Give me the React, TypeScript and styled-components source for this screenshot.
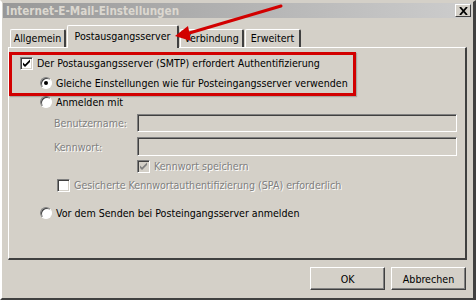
import React from "react";
import styled, { createGlobalStyle } from "styled-components";

const GlobalStyle = createGlobalStyle`
  html, body {
    margin: 0;
    padding: 0;
    background: #d4d0c8;
  }
  body {
    font-family: "DejaVu Sans Condensed", "DejaVu Sans", sans-serif;
    font-size: 10.6px;
    color: #000;
  }
`;

const face = "#d4d0c8";
const shadow = "#808080";
const darkShadow = "#404040";

const Window = styled.div`
  position: relative;
  box-sizing: border-box;
  width: 476px;
  height: 300px;
  background: ${face};
  border-left: 2px solid #fff;
  border-top: 2px solid ${face};
  border-right: 3px solid ${darkShadow};
  border-bottom: 2px solid ${darkShadow};
  padding: 1px 0 0 1px;
  overflow: hidden;
`;

const TitleBar = styled.div`
  display: flex;
  align-items: center;
  justify-content: space-between;
  height: 15px;
  margin-right: 1px;
  padding: 0 1px 0 3px;
  background: linear-gradient(to right, #989898, #cdcdcd);
`;

const Title = styled.span`
  font-weight: bold;
  color: #dcd8d0;
  font-size: 11.6px;
`;

const CloseButton = styled.div`
  box-sizing: border-box;
  width: 16px;
  height: 13px;
  background: ${face};
  border-top: 1px solid #fff;
  border-left: 1px solid #fff;
  border-right: 1px solid ${darkShadow};
  border-bottom: 1px solid ${darkShadow};
  display: flex;
  align-items: center;
  justify-content: center;
`;

const TabStrip = styled.div`
  display: flex;
  align-items: flex-end;
  height: 29px;
  padding-left: 7px;
`;

const Tab = styled.div<{ $active?: boolean; $w: number }>`
  box-sizing: border-box;
  width: ${(p) => p.$w}px;
  height: ${(p) => (p.$active ? "23px" : "18px")};
  margin-bottom: ${(p) => (p.$active ? "-1px" : "0")};
  margin-right: 1px;
  padding-top: ${(p) => (p.$active ? "4px" : "2px")};
  text-align: center;
  background: ${face};
  border-top: 1px solid #fff;
  border-left: 1px solid #fff;
  border-right: 2px solid ${darkShadow};
  border-top-left-radius: 2px;
  border-top-right-radius: 2px;
  white-space: nowrap;
  position: relative;
`;

const Panel = styled.div`
  box-sizing: border-box;
  width: 459px;
  height: 213px;
  margin-left: 5px;
  border-top: 1px solid #fff;
  border-left: 1px solid #fff;
  border-right: 2px solid ${darkShadow};
  border-bottom: 2px solid ${darkShadow};
  padding: 6px 0 0 11px;
  display: flex;
  flex-direction: column;
`;

const Row = styled.div<{ $top?: number; $indent?: number; $h?: number }>`
  display: flex;
  align-items: center;
  height: ${(p) => p.$h ?? 18}px;
  margin-top: ${(p) => p.$top ?? 0}px;
  padding-left: ${(p) => p.$indent ?? 0}px;
  gap: 4px;
  white-space: nowrap;
`;

const Label = styled.span<{ $disabled?: boolean; $width?: number }>`
  color: ${(p) => (p.$disabled ? shadow : "#000")};
  text-shadow: ${(p) => (p.$disabled ? "1px 1px 0 #fff" : "none")};
  width: ${(p) => (p.$width ? `${p.$width}px` : "auto")};
`;

const Box = styled.span<{ $disabled?: boolean }>`
  box-sizing: border-box;
  width: 13px;
  height: 13px;
  flex: none;
  background: ${(p) => (p.$disabled ? face : "#fff")};
  border-top: 1px solid ${shadow};
  border-left: 1px solid ${shadow};
  border-right: 1px solid #fff;
  border-bottom: 1px solid #fff;
  box-shadow: inset 1px 1px 0 ${darkShadow}, inset -1px -1px 0 ${face};
  display: flex;
  align-items: center;
  justify-content: center;
`;

const Radio = styled.span`
  box-sizing: border-box;
  width: 12px;
  height: 12px;
  flex: none;
  border-radius: 50%;
  background: #fff;
  border: 1px solid;
  border-color: ${shadow} #fff #fff ${shadow};
  box-shadow: inset 1px 1px 0 ${darkShadow};
  display: flex;
  align-items: center;
  justify-content: center;
`;

const Dot = styled.span`
  width: 4px;
  height: 4px;
  border-radius: 50%;
  background: #000;
`;

const Field = styled.div`
  box-sizing: border-box;
  width: 320px;
  height: 100%;
  background: ${face};
  border-top: 1px solid ${shadow};
  border-left: 1px solid ${shadow};
  border-right: 1px solid #fff;
  border-bottom: 1px solid #fff;
  box-shadow: inset 1px 1px 0 ${darkShadow}, inset -1px -1px 0 ${face};
`;

const Footer = styled.div`
  display: flex;
  justify-content: flex-end;
  gap: 6px;
  padding: 7px 7px 0 0;
`;

const Button = styled.div`
  box-sizing: border-box;
  width: 75px;
  height: 23px;
  background: ${face};
  border-top: 1px solid #fff;
  border-left: 1px solid #fff;
  border-right: 1px solid ${darkShadow};
  border-bottom: 1px solid ${darkShadow};
  box-shadow: inset -1px -1px 0 ${shadow};
  display: flex;
  align-items: center;
  justify-content: center;
`;

const Highlight = styled.div`
  position: absolute;
  z-index: 2;
  left: 7px;
  top: 50px;
  width: 347px;
  height: 44px;
  box-sizing: border-box;
  border: 3px solid #d20000;
  box-shadow: 1px 1px 1px rgba(0, 0, 0, 0.2);
  pointer-events: none;
`;

const ArrowLayer = styled.svg`
  position: absolute;
  z-index: 3;
  left: -2px;
  top: -2px;
  pointer-events: none;
`;

const Check = ({ color = "#000" }: { color?: string }) => (
  <svg width="9" height="9" viewBox="0 0 9 9">
    <path d="M1 3.5 L3 5.5 L8 0.5 L8 3 L3 8 L1 6 Z" fill={color} />
  </svg>
);

export default function App() {
  return (
    <>
      <GlobalStyle />
      <Window>
        <TitleBar>
          <Title>Internet-E-Mail-Einstellungen</Title>
          <CloseButton>
            <svg width="9" height="8" viewBox="0 0 9 8">
              <path d="M1 0 L8 8 M8 0 L1 8" stroke="#000" strokeWidth="1.8" fill="none" />
            </svg>
          </CloseButton>
        </TitleBar>
        <TabStrip>
          <Tab $w={56}>Allgemein</Tab>
          <Tab $w={112} $active>Postausgangsserver</Tab>
          <Tab $w={64}>Verbindung</Tab>
          <Tab $w={56}>Erweitert</Tab>
        </TabStrip>
        <Panel>
          <Row>
            <Box>
              <Check />
            </Box>
            <Label>Der Postausgangsserver (SMTP) erfordert Authentifizierung</Label>
          </Row>
          <Row $top={2} $indent={20}>
            <Radio>
              <Dot />
            </Radio>
            <Label>Gleiche Einstellungen wie für Posteingangsserver verwenden</Label>
          </Row>
          <Row $top={1} $indent={20}>
            <Radio />
            <Label>Anmelden mit</Label>
          </Row>
          <Row $top={3} $indent={34}>
            <Label $disabled $width={79}>Benutzername:</Label>
            <Field />
          </Row>
          <Row $top={5} $indent={34} $h={19}>
            <Label $disabled $width={79}>Kennwort:</Label>
            <Field />
          </Row>
          <Row $top={2} $indent={117} $h={16}>
            <Box $disabled>
              <Check color={shadow} />
            </Box>
            <Label $disabled>Kennwort speichern</Label>
          </Row>
          <Row $top={2} $indent={37}>
            <Box />
            <Label $disabled>Gesicherte Kennwortauthentifizierung (SPA) erforderlich</Label>
          </Row>
          <Row $top={10} $indent={20}>
            <Radio />
            <Label>Vor dem Senden bei Posteingangsserver anmelden</Label>
          </Row>
        </Panel>
        <Footer>
          <Button>OK</Button>
          <Button>Abbrechen</Button>
        </Footer>
        <Highlight />
        <ArrowLayer width="476" height="300" viewBox="0 0 476 300">
          <line x1="281" y1="6" x2="186" y2="34" stroke="#d20000" strokeWidth="3" strokeLinecap="round" />
          <polygon points="175,36 188,26 191,41" fill="#d20000" />
        </ArrowLayer>
      </Window>
    </>
  );
}
